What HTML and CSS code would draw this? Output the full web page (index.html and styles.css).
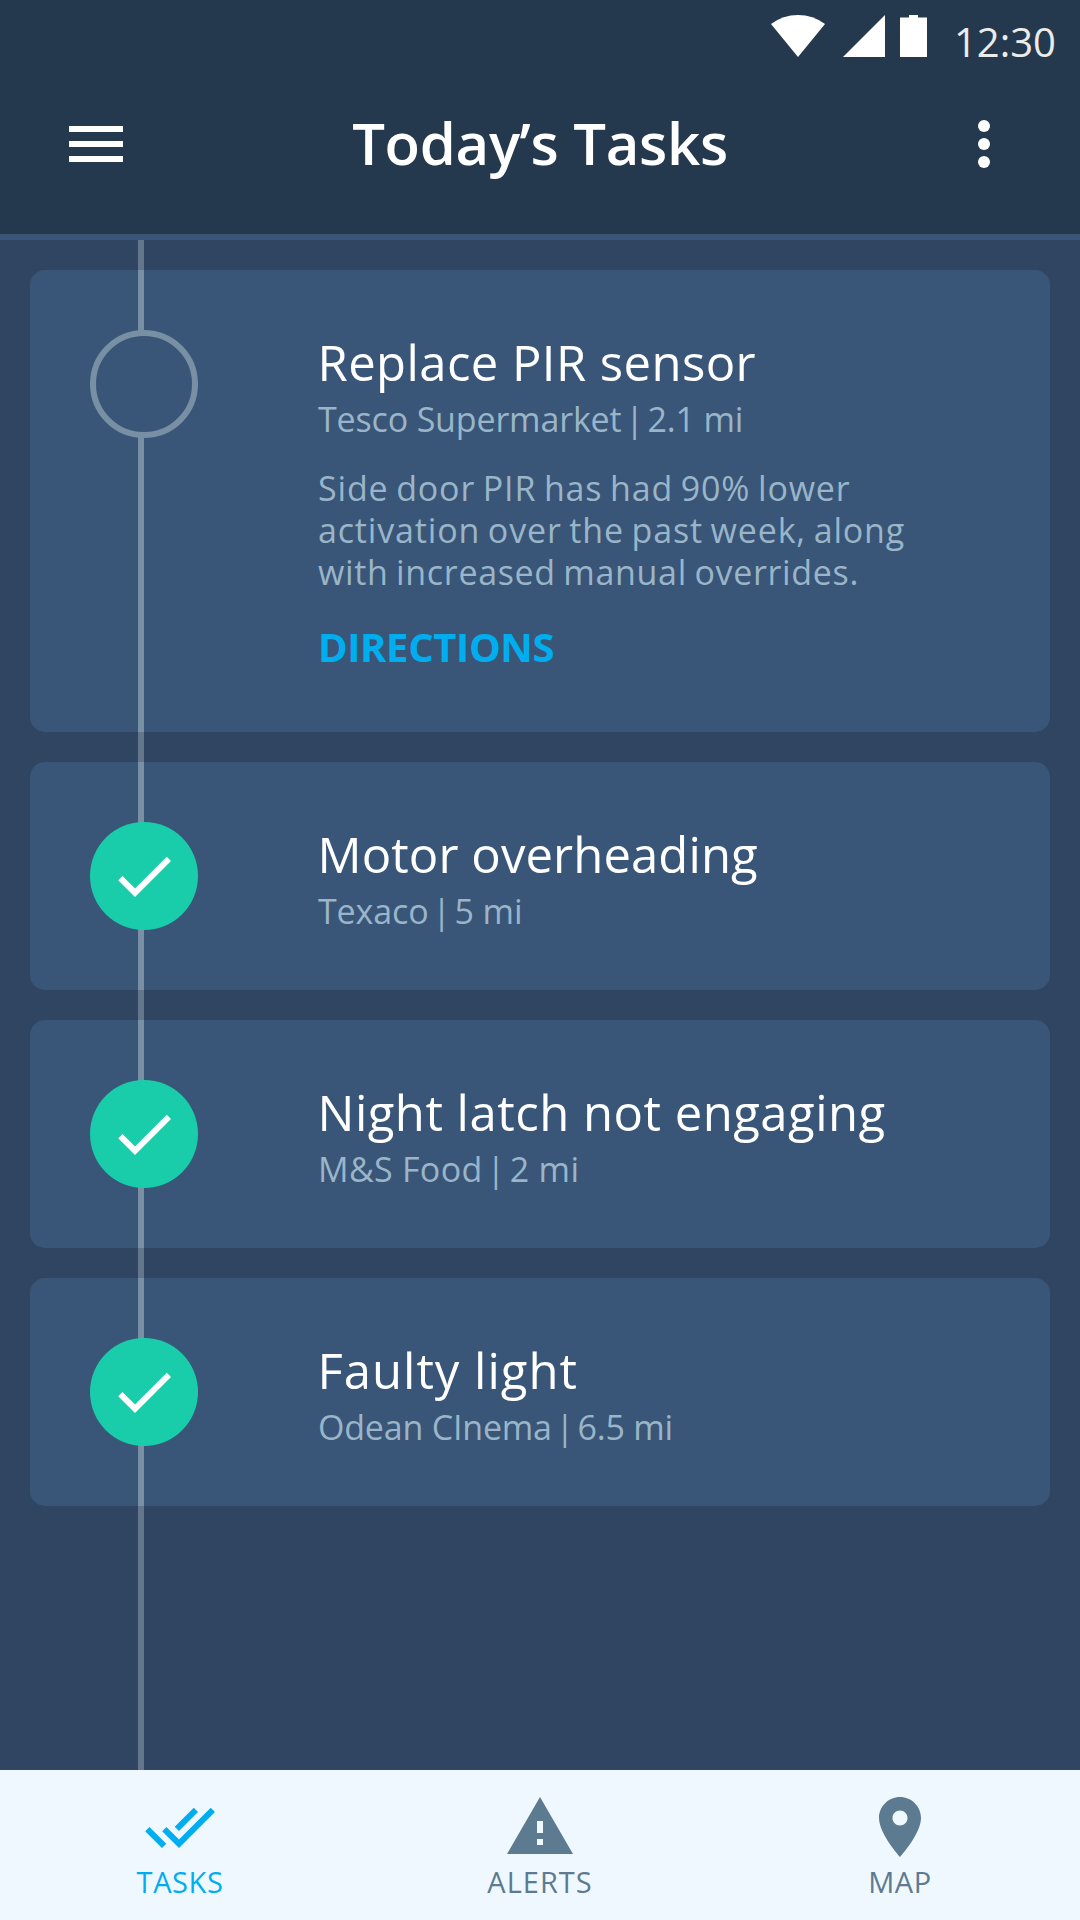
FILE: index.html
```html
<!DOCTYPE html>
<html lang="en">
<head>
<meta charset="utf-8">
<title>Today’s Tasks</title>
<link rel="stylesheet" href="styles.css">
</head>
<body>
<div class="screen">
  <header class="header">
    <div class="status-bar">
      <svg class="status-icons" width="156" height="42" viewBox="0 0 156 42" fill="currentColor">
        <path d="M27 42L0 9Q12 0 27 0T54 9z"/>
        <path d="M72 42L114 0V42z"/>
        <path d="M129 2.5h9V0h9v2.5h9V42h-27z"/>
      </svg>
      <span class="clock">12:30</span>
    </div>
    <div class="app-bar">
      <button class="icon-button" aria-label="Menu">
        <svg width="54" height="36" viewBox="0 0 54 36" fill="currentColor"><path d="M0 0h54v6H0zM0 15h54v6H0zM0 30h54v6H0z"/></svg>
      </button>
      <h1 class="app-title">Today’s Tasks</h1>
      <button class="icon-button" aria-label="More">
        <svg width="12" height="48" viewBox="0 0 12 48" fill="currentColor"><circle cx="6" cy="6" r="6"/><circle cx="6" cy="24" r="6"/><circle cx="6" cy="42" r="6"/></svg>
      </button>
    </div>
  </header>

  <main class="timeline">
    <article class="task task--open">
      <div class="marker"></div>
      <div class="task-body">
        <h2 class="task-title task-title--sensor">Replace PIR sensor</h2>
        <p class="task-meta">Tesco Supermarket<span class="divider"> | </span>2.1 mi</p>
        <p class="task-description">Side door PIR has had 90% lower<br>activation over the past week, along<br><span class="last-line">with increased manual overrides.</span></p>
        <a class="directions">DIRECTIONS</a>
      </div>
    </article>
    <article class="task">
      <div class="marker marker--done"><svg width="72" height="72" viewBox="0 0 24 24"><path fill="#fff" d="M9 16.17L4.83 12l-1.42 1.41L9 19 21 7l-1.41-1.41z"/></svg></div>
      <div class="task-body">
        <h2 class="task-title task-title--motor">Motor overheading</h2>
        <p class="task-meta task-meta--motor">Texaco<span class="divider"> | </span>5 mi</p>
      </div>
    </article>
    <article class="task">
      <div class="marker marker--done"><svg width="72" height="72" viewBox="0 0 24 24"><path fill="#fff" d="M9 16.17L4.83 12l-1.42 1.41L9 19 21 7l-1.41-1.41z"/></svg></div>
      <div class="task-body">
        <h2 class="task-title task-title--latch">Night latch not engaging</h2>
        <p class="task-meta task-meta--latch">M&amp;S Food<span class="divider"> | </span>2 mi</p>
      </div>
    </article>
    <article class="task">
      <div class="marker marker--done"><svg width="72" height="72" viewBox="0 0 24 24"><path fill="#fff" d="M9 16.17L4.83 12l-1.42 1.41L9 19 21 7l-1.41-1.41z"/></svg></div>
      <div class="task-body">
        <h2 class="task-title task-title--light">Faulty light</h2>
        <p class="task-meta task-meta--light">Odean CInema<span class="divider"> | </span>6.5 mi</p>
      </div>
    </article>
  </main>

  <nav class="tab-bar">
    <a class="tab tab--active">
      <svg width="72" height="72" viewBox="0 0 24 24" fill="currentColor"><path d="M18 7l-1.41-1.41-6.34 6.34 1.41 1.41L18 7zm4.24-1.41L11.66 16.17 7.48 12l-1.41 1.41L11.66 19l12-12-1.42-1.41zM.41 13.41L6 19l1.41-1.41L1.83 12 .41 13.41z"/></svg>
      <span class="tab-label">TASKS</span>
    </a>
    <a class="tab">
      <svg width="72" height="72" viewBox="0 0 24 24" fill="currentColor"><path d="M1 21h22L12 2 1 21zm12-3h-2v-2h2v2zm0-4h-2v-4h2v4z"/></svg>
      <span class="tab-label tab-label--alerts">ALERTS</span>
    </a>
    <a class="tab">
      <svg width="72" height="72" viewBox="0 0 24 24" fill="currentColor"><path d="M12 2C8.13 2 5 5.13 5 9c0 5.25 7 13 7 13s7-7.75 7-13c0-3.87-3.13-7-7-7zm0 9.5c-1.38 0-2.5-1.12-2.5-2.5s1.12-2.5 2.5-2.5 2.5 1.12 2.5 2.5-1.12 2.5-2.5 2.5z"/></svg>
      <span class="tab-label">MAP</span>
    </a>
  </nav>
</div>
</body>
</html>
```
FILE: styles.css
```css
* {
  box-sizing: border-box;
  margin: 0;
}

body {
  font-family: "Open Sans", sans-serif;
  background: #304562;
}

.screen {
  display: flex;
  flex-direction: column;
  width: 1080px;
  height: 1920px;
  overflow: hidden;
}

/* Header */

.header {
  height: 240px;
  flex: none;
  background: #25394e;
  border-bottom: 6px solid #395578;
  color: #fff;
}

.status-bar {
  display: flex;
  justify-content: flex-end;
  align-items: flex-start;
  gap: 27px;
  height: 60px;
  padding: 15px 24px 0 0;
}

.clock {
  color: #ebebeb;
  font-size: 40px;
  line-height: 54px;
  width: 102px;
  white-space: nowrap;
}

.app-bar {
  display: flex;
  align-items: center;
  justify-content: space-between;
  height: 174px;
  padding: 0 42px 6px;
}

.icon-button {
  display: flex;
  align-items: center;
  justify-content: center;
  width: 108px;
  height: 108px;
  padding: 0;
  border: 0;
  background: none;
  color: #fff;
}

.app-title {
  padding-bottom: 2px;
  font-size: 58px;
  font-weight: 600;
  line-height: 84px;
  letter-spacing: -0.3px;
  white-space: nowrap;
}

/* Task timeline */

.timeline {
  position: relative;
  display: flex;
  flex-direction: column;
  gap: 30px;
  flex: 1;
  padding: 30px 30px 0;
}

.timeline::before {
  content: "";
  position: absolute;
  left: 138px;
  top: 0;
  bottom: 0;
  width: 6px;
  background: #64768b;
}

.task {
  position: relative;
  display: flex;
  gap: 120px;
  height: 228px;
  flex: none;
  padding: 60px;
  border-radius: 15px;
  background: #395678;
}

.task--open {
  height: 462px;
}

.task::before {
  content: "";
  position: absolute;
  left: 108px;
  top: 0;
  bottom: 0;
  width: 6px;
  background: #788fa4;
}

.marker {
  position: relative;
  display: flex;
  align-items: center;
  justify-content: center;
  flex: none;
  width: 108px;
  height: 108px;
  border: 6px solid #788fa4;
  border-radius: 50%;
  background: #395678;
}

.marker--done {
  border: 0;
  background: #1acdaa;
}

.task-body {
  padding-top: 2px;
  white-space: nowrap;
  color: #9ab5c8;
}

.task-title {
  margin-left: -0.5px;
  color: #fff;
  font-size: 49px;
  font-weight: 400;
  line-height: 60px;
}

.task-title--sensor { letter-spacing: 0.42px; }
.task-title--motor { letter-spacing: 0.1px; }
.task-title--latch { letter-spacing: 0.5px; }
.task-title--light { letter-spacing: 0.99px; }

.task-meta {
  margin-top: 6px;
  font-size: 34px;
  line-height: 42px;
  letter-spacing: -0.16px;
}

.task-meta--motor { letter-spacing: -0.12px; }
.task-meta--latch { letter-spacing: 0.3px; }
.task-meta--light { letter-spacing: -0.2px; }

.divider {
  word-spacing: -5px;
}

.task-description {
  margin-top: 27px;
  font-size: 34px;
  line-height: 42px;
  letter-spacing: 0.84px;
  word-spacing: -2px;
}

.last-line {
  letter-spacing: 0.67px;
}

.directions {
  display: block;
  margin-top: 30px;
  color: #00aeef;
  font-size: 40px;
  font-weight: 700;
  line-height: 48px;
  letter-spacing: -0.38px;
}

/* Bottom navigation */

.tab-bar {
  display: grid;
  grid-template-columns: repeat(3, 1fr);
  height: 150px;
  flex: none;
  background: #f0f8ff;
}

.tab {
  display: flex;
  flex-direction: column;
  align-items: center;
  padding-top: 21px;
  color: #5d7b90;
}

.tab--active {
  color: #00aeef;
}

.tab-label {
  margin-top: 1px;
  font-size: 29px;
  line-height: 36px;
  letter-spacing: 0.6px;
}

.tab-label--alerts {
  letter-spacing: 1px;
}
```
